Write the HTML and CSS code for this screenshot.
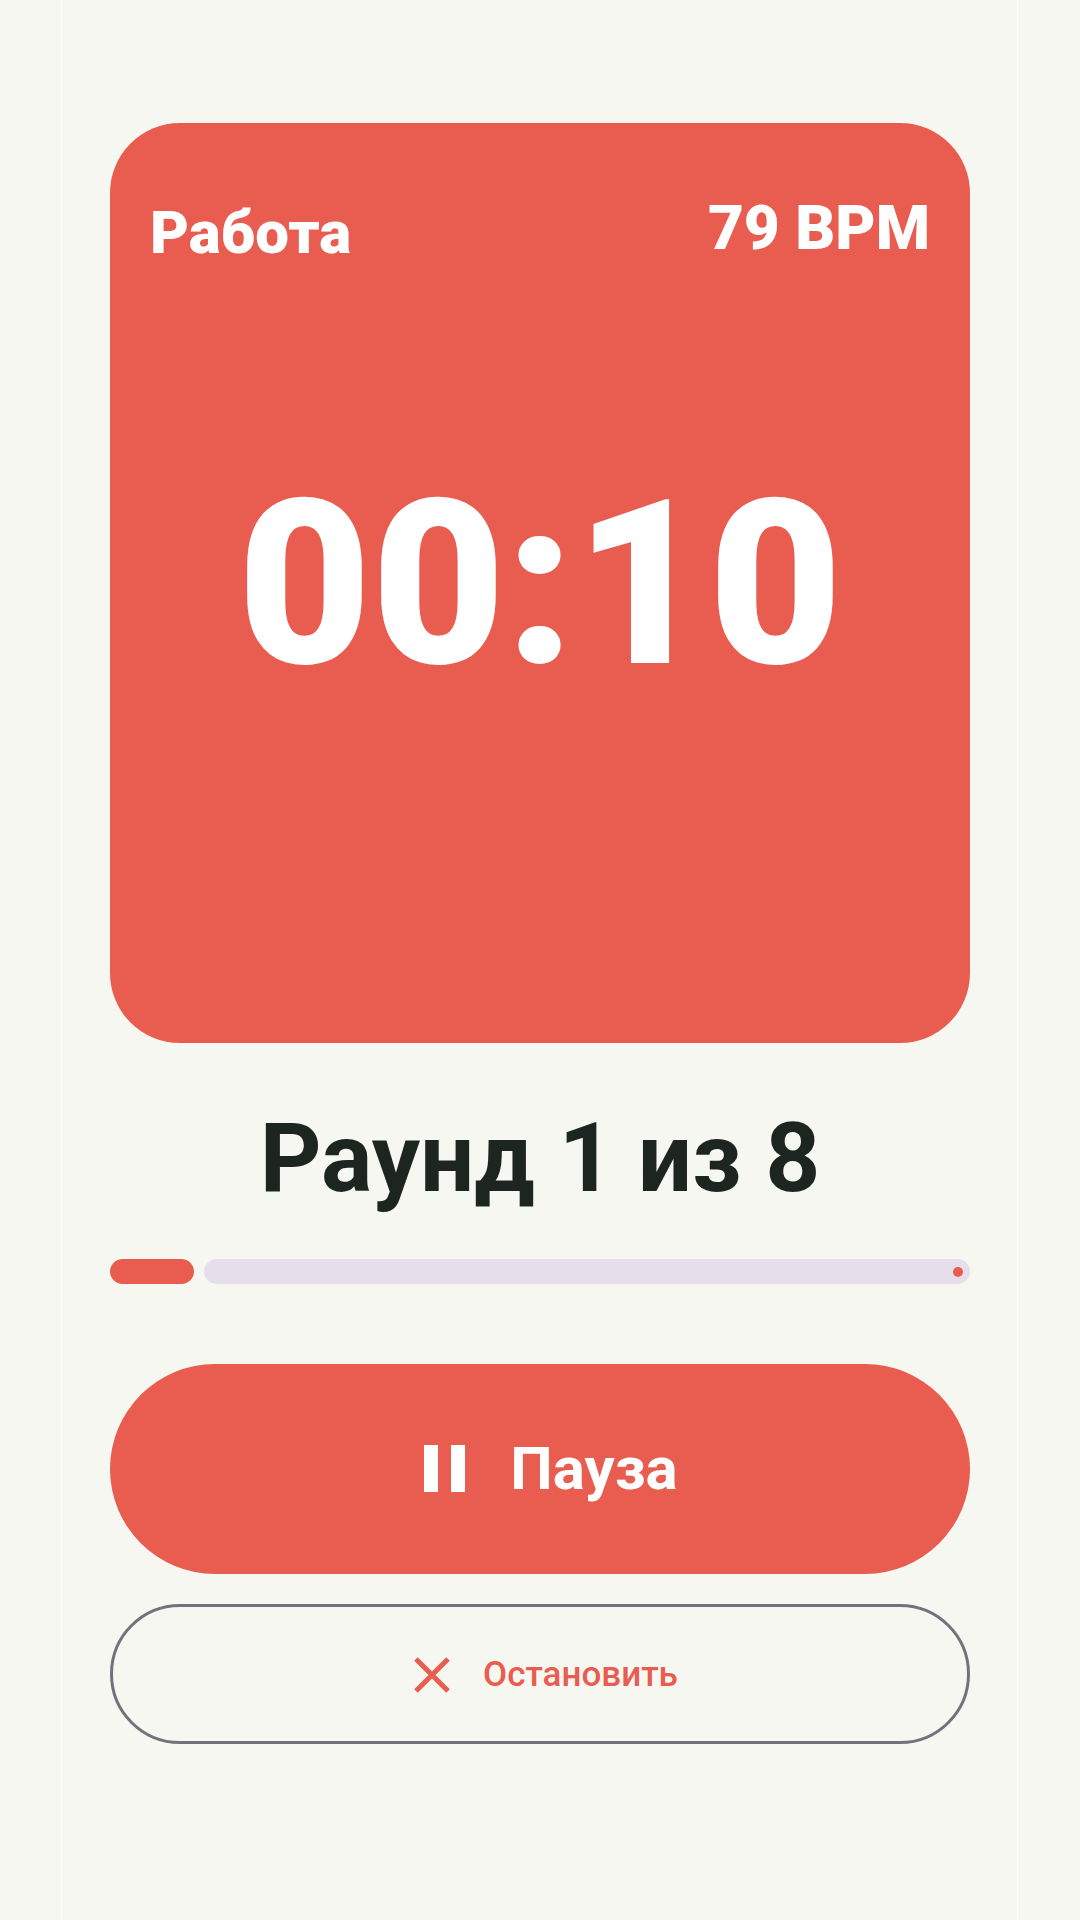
FILE: index.html
```html
<!DOCTYPE html>
<html lang="ru">
<head>
<meta charset="utf-8">
<meta name="viewport" content="width=device-width, initial-scale=1">
<title>Таймер</title>
<link rel="stylesheet" href="styles.css">
</head>
<body>
<main class="screen">
  <section class="timer">
    <header class="timer-head">
      <h1 class="phase">Работа</h1>
      <p class="pulse">79 BPM</p>
    </header>
    <p class="clock">00:10</p>
  </section>
  <h2 class="round">Раунд 1 из 8</h2>
  <div class="progress" role="progressbar" aria-label="Раунды" aria-valuemin="0" aria-valuemax="8" aria-valuenow="1">
    <span class="done"></span>
    <span class="rest"></span>
  </div>
  <button class="pause" type="button">
    <svg class="pause-icon" viewBox="0 0 42 48" aria-hidden="true"><path d="M0 0h14v47H0zM27 0h14v47H27z" fill="currentColor"/></svg>
    <span>Пауза</span>
  </button>
  <button class="stop" type="button">
    <svg class="stop-icon" viewBox="0 0 36 36" aria-hidden="true"><path d="M2 2L34 34M34 2L2 34" stroke="currentColor" stroke-width="5"/></svg>
    <span>Остановить</span>
  </button>
</main>
</body>
</html>
```
FILE: styles.css
```css
* { box-sizing: border-box; }
body {
  margin: 0;
  background: #f6f7f1;
  color: #1c2520;
  font-family: Roboto, "Noto Sans", sans-serif;
}
h1, h2, p { margin: 0; }
.screen {
  display: flex;
  flex-direction: column;
  min-height: 100vh;
  margin: 0 62px 0 61px;
  padding: 123px 47px 176px 48px;
  border: solid #fdfefa;
  border-width: 0 1px;
}
.timer {
  display: flex;
  flex-direction: column;
  flex: 1;
  padding: 69px 40px 0;
  border-radius: 70px;
  background: #e95d50;
  color: #fff;
}
.timer-head {
  display: flex;
  justify-content: space-between;
  align-items: flex-start;
}
.phase, .pulse { line-height: 72px; font-weight: 900; }
.phase { padding-top: 5px; font-size: 60px; }
.pulse { font-size: 62px; }
.clock {
  margin-top: 179px;
  font-size: 231px;
  line-height: 272px;
  font-weight: 900;
  text-align: center;
}
.round {
  margin-top: 59px;
  font-size: 96px;
  line-height: 112px;
  font-weight: 700;
  text-align: center;
}
.progress { display: flex; gap: 10px; height: 25px; margin-top: 45px; }
.done { flex: 1; border-radius: 13px; background: #e95d50; }
.rest {
  display: flex;
  flex: 9;
  align-items: center;
  justify-content: flex-end;
  padding-right: 7px;
  border-radius: 13px;
  background: #e7deeb;
}
.rest::after { content: ""; width: 10px; height: 10px; border-radius: 50%; background: #e95d50; }
button {
  display: flex;
  align-items: center;
  justify-content: center;
  font-family: inherit;
  cursor: pointer;
}
.pause {
  gap: 44px;
  height: 210px;
  margin-top: 80px;
  padding: 0 0 0 22px;
  border: 0;
  border-radius: 105px;
  background: #e95d50;
  color: #fff;
  font-size: 60px;
  line-height: 72px;
  font-weight: 700;
}
.pause-icon { width: 42px; height: 48px; }
.stop {
  gap: 33px;
  height: 140px;
  margin-top: 30px;
  padding: 2px 0 0 12px;
  border: 3px solid #74707c;
  border-radius: 70px;
  background: transparent;
  color: #e95d50;
  font-size: 35px;
  line-height: 48px;
  font-weight: 500;
}
.stop-icon { width: 36px; height: 36px; }
```
